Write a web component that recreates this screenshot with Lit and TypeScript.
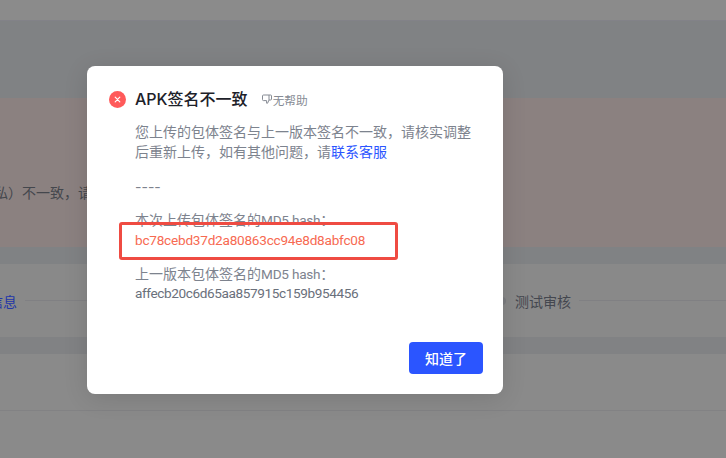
import { LitElement, html, css } from "lit";
import { customElement } from "lit/decorators.js";

@customElement("app-root")
export class AppRoot extends LitElement {
  static styles = css`
    :host { display: block; width: 726px; height: 458px; position: relative; overflow: hidden; background: #8a8a8a;
      font-family: Inter, "Noto Sans CJK SC", sans-serif; }
    * { box-sizing: border-box; }
    .page { height: 458px; display: flex; flex-direction: column; }
    .top { height: 21px; background: #8b8b8b; border-bottom: 1px solid #828288; flex: none; }
    .gap { background: #808284; flex: none; }
    .g1 { height: 77px; }
    .g2 { height: 17px; }
    .g3 { height: 17px; background: #818284; }
    .alert { height: 149px; flex: none; background: #8b8180; display: flex; align-items: center; overflow: hidden; padding-top: 38px; }
    .alert span { margin-left: -6px; font-size: 14px; color: #44474d; white-space: nowrap; }
    .steps { height: 73px; flex: none; background: #898989; display: flex; align-items: center; font-size: 14px; color: #44474f; white-space: nowrap; overflow: hidden; }
    .s1 { margin-left: -11px; color: #1f36a8; }
    .rule { height: 1px; background: #808083; }
    .r1 { margin-left: 8px; width: 140px; }
    .node { margin-left: 333px; width: 8px; height: 8px; border-radius: 50%; background: #7c7d80; flex: none; }
    .s2 { margin-left: 9px; }
    .r2 { margin-left: 8px; flex: 1; }
    .row { height: 57px; flex: none; background: #8a8a8a; border-bottom: 1px solid #828284; }
    .rest { flex: 1; background: #8a8a8a; }

    .modal { position: absolute; left: 87px; top: 66px; width: 416px; height: 328px; background: #fff; border-radius: 8px;
      box-shadow: 0 4px 24px rgba(0,0,0,.12); padding: 24px 20px 20px 22px; display: flex; flex-direction: column; }
    .head { display: flex; align-items: center; height: 18px; }
    .ico { width: 17px; height: 17px; flex: none; margin-right: 9px; }
    .title { font-size: 16px; font-weight: 500; color: #1d2129; line-height: 18px; }
    .help { display: flex; align-items: center; margin-left: 13px; font-size: 11.7px; color: #868b94; }
    .help svg { width: 12px; height: 12px; flex: none; }
    .body { margin: 14px 0 0 26px; width: 344px; font-size: 14px; line-height: 20px; color: #7d838e; flex: 1; }
    .body p { margin: 0; }
    .lat { font-family: Roboto, sans-serif; font-size: 13.6px; letter-spacing: -0.23px; line-height: 20px; }
    .link { color: #2b55ff; }
    .dash { margin-top: 15px !important; }
    .md { margin-top: 13px !important; }
    .md2 { margin-top: 14px !important; }
    .hash { color: #6a707b; margin-top: -1px !important; letter-spacing: -0.39px; }
    .red { color: #f76a52; }
    .foot { display: flex; justify-content: flex-end; }
    .btn { width: 74px; height: 32px; border: 0; border-radius: 4px; background: #2b55ff; color: #fff; font: 500 14px Inter, "Noto Sans CJK SC", sans-serif; }
    .mark { position: absolute; left: 119px; top: 222px; width: 279px; height: 38px; border: 3px solid #ef4b42; border-radius: 3px; }
  `;

  render() {
    return html`
      <div class="page">
        <div class="top"></div>
        <div class="gap g1"></div>
        <div class="alert"><span>私）不一致，请</span></div>
        <div class="gap g2"></div>
        <div class="steps">
          <span class="s1">信息</span><i class="rule r1"></i><i class="node"></i><span class="s2">测试审核</span><i class="rule r2"></i>
        </div>
        <div class="gap g3"></div>
        <div class="row"></div>
        <div class="rest"></div>
      </div>
      <div class="modal">
        <div class="head">
          <svg class="ico" viewBox="0 0 17 17"><circle cx="8.5" cy="8.5" r="8.5" fill="#ff5a5a"/><path d="M6.2 6.2l4.6 4.6M10.8 6.2l-4.6 4.6" stroke="#fff" stroke-width="1.2" stroke-linecap="round"/></svg>
          <span class="title">APK签名不一致</span>
          <span class="help">
            <svg viewBox="0 0 12 12" fill="none" stroke="#868b94" stroke-width="1" stroke-linejoin="round"><path d="M2.5 2h7A1 1 0 0 1 10.5 3v3A1 1 0 0 1 9.5 7H8L6.6 10.2H5.6V7.6H2.5A1 1 0 0 1 1.5 6.6V3A1 1 0 0 1 2.5 2z"/><path d="M8 2v5"/></svg>无帮助
          </span>
        </div>
        <div class="body">
          <p>您上传的包体签名与上一版本签名不一致，请核实调整后重新上传，如有其他问题，请<span class="link">联系客服</span></p>
          <p class="dash">----</p>
          <p class="md">本次上传包体签名的<span class="lat">MD5 hash</span>：</p>
          <p class="red lat">bc78cebd37d2a80863cc94e8d8abfc08</p>
          <p class="md2">上一版本包体签名的<span class="lat">MD5 hash</span>：</p>
          <p class="lat hash">affecb20c6d65aa857915c159b954456</p>
        </div>
        <div class="foot"><button class="btn">知道了</button></div>
      </div>
      <div class="mark"></div>
    `;
  }
}
